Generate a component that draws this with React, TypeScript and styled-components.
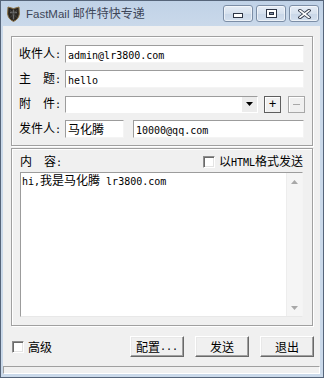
import React from 'react';
import styled, { createGlobalStyle } from 'styled-components';

const GlobalStyle = createGlobalStyle`
  html, body { margin: 0; padding: 0; background: #c6d6e8; }
  * { box-sizing: border-box; }
`;

const CJK_RE = /([\u2E80-\u9FFF\u3000-\u303F\uFF00-\uFFEF]+)/;

const Cjk = styled.span`
  font-family: "Noto Sans CJK SC", sans-serif;
  font-size: 12px;
`;

const Ascii = styled.span`
  font-family: "DejaVu Sans Mono", monospace;
  font-size: 10px;
  white-space: pre;
`;

const Mixed = ({ text }: { text: string }) => (
  <>
    {text
      .split(CJK_RE)
      .filter(Boolean)
      .map((part, i) =>
        CJK_RE.test(part) ? <Cjk key={i}>{part}</Cjk> : <Ascii key={i}>{part}</Ascii>
      )}
  </>
);

const Window = styled.div`
  width: 324px;
  height: 378px;
  border: 1px solid #56657a;
  background: linear-gradient(#c0d2e7, #cad9ea 26px, #cad9ea);
  padding: 0 3px 3px 2px;
  display: flex;
  flex-direction: column;
`;

const TitleBar = styled.div`
  height: 25px;
  flex-shrink: 0;
  display: flex;
  align-items: center;
  padding: 0 1px 0 4px;
`;

const TitleText = styled.div`
  margin-left: 6px;
  color: #3d4658;
  white-space: nowrap;
  line-height: 16px;
`;

const TitleLatin = styled.span`
  font-family: "Liberation Sans", sans-serif;
  font-size: 11.5px;
`;

const TitleCjk = styled.span`
  font-family: "Noto Sans CJK SC", sans-serif;
  font-size: 12px;
`;

const Captions = styled.div`
  margin-left: auto;
  align-self: flex-start;
  margin-top: 4px;
  display: flex;
  gap: 3px;
`;

const CaptionButton = styled.div<{ $glyph: 'min' | 'max' | 'close' }>`
  width: 30px;
  height: 17px;
  border: 1px solid #7c8ea6;
  border-radius: 3px;
  background: linear-gradient(#e6edf6, #d6e1ee 50%, #c8d6e8 51%, #d4e0ee);
  box-shadow: inset 0 0 0 1px rgba(255, 255, 255, 0.55);
  display: flex;
  justify-content: center;
  align-items: ${(p) => (p.$glyph === 'min' ? 'flex-end' : 'center')};
  padding-bottom: ${(p) => (p.$glyph === 'min' ? '3px' : '0')};
`;

const Client = styled.div`
  flex: 1;
  background: #f0f0f0;
  display: flex;
  flex-direction: column;
  padding-top: 10px;
`;

const Group = styled.div`
  margin: 0 7px 0 8px;
  border: 1px solid #a0a0a0;
  box-shadow: inset 1px 1px 0 #ffffff, 1px 1px 0 #ffffff;
`;

const HeaderGroup = styled(Group)`
  padding: 8px 8px 7px 7px;
  display: flex;
  flex-direction: column;
  gap: 7px;
`;

const BodyGroup = styled(Group)`
  margin-top: 2px;
  height: 178px;
  padding: 3px 9px 8px 8px;
  display: flex;
  flex-direction: column;
`;

const Row = styled.div`
  height: 18px;
  display: flex;
  align-items: center;
`;

const Label = styled.div`
  width: 46px;
  flex-shrink: 0;
  line-height: 18px;
  white-space: nowrap;
  color: #000;
`;

const EditBox = styled.div<{ $width?: number }>`
  height: 18px;
  ${(p) => (p.$width ? `width: ${p.$width}px; flex-shrink: 0;` : 'flex: 1;')}
  background: #fff;
  border-top: 1px solid #9c9c9c;
  border-left: 1px solid #9c9c9c;
  border-right: 1px solid #f4f4f4;
  border-bottom: 1px solid #f4f4f4;
  padding: 0 2px;
  line-height: 16px;
  white-space: nowrap;
  overflow: hidden;
  color: #000;
`;

const Combo = styled.div`
  flex: 1;
  height: 17px;
  background: #fff;
  border-top: 1px solid #9c9c9c;
  border-left: 1px solid #9c9c9c;
  border-right: 1px solid #fff;
  border-bottom: 1px solid #fff;
  display: flex;
  justify-content: flex-end;
`;

const DropButton = styled.div`
  width: 15px;
  background: #ececec;
  display: flex;
  align-items: center;
  justify-content: center;
`;

const SmallButton = styled.div<{ $disabled?: boolean }>`
  width: 17px;
  height: 17px;
  flex-shrink: 0;
  margin-left: ${(p) => (p.$disabled ? '7px' : '6px')};
  margin-right: ${(p) => (p.$disabled ? '-1px' : '0')};
  border: 1px solid ${(p) => (p.$disabled ? '#a8a8a8' : '#5e5e5e')};
  box-shadow: inset 1px 1px 0 #fff;
  background: #f0f0f0;
  color: ${(p) => (p.$disabled ? '#a8a8a8' : '#000')};
  font-family: "DejaVu Sans Mono", monospace;
  font-size: 12px;
  line-height: 14px;
  text-align: center;
`;

const NameGap = styled.div`
  width: 9px;
  flex-shrink: 0;
`;

const BodyHeader = styled.div`
  height: 20px;
  display: flex;
  align-items: center;
  justify-content: space-between;
`;

const PlainText = styled.div`
  line-height: 16px;
  white-space: nowrap;
  color: #000;
`;

const CheckLabel = styled.label`
  display: flex;
  align-items: center;
  gap: 4px;
  color: #000;
  line-height: 16px;
  white-space: nowrap;
`;

const CheckBox = styled.span`
  width: 12px;
  height: 12px;
  flex-shrink: 0;
  background: #fff;
  border-top: 1px solid #8e8e8e;
  border-left: 1px solid #8e8e8e;
  border-right: 1px solid #fff;
  border-bottom: 1px solid #fff;
  box-shadow: inset 1px 1px 0 #6a6a6a, inset -1px -1px 0 #e3e3e3;
`;

const TextArea = styled.div`
  flex: 1;
  display: flex;
  background: #fff;
  border-top: 1px solid #9c9c9c;
  border-left: 1px solid #9c9c9c;
  border-right: 1px solid #f4f4f4;
  border-bottom: 1px solid #e8e8e8;
`;

const BodyText = styled.div`
  flex: 1;
  padding: 0 0 0 1px;
  line-height: 13px;
  white-space: nowrap;
  color: #000;
`;

const ScrollBar = styled.div`
  width: 16px;
  background: #f5f5f5;
  border-left: 1px solid #ededed;
  display: flex;
  flex-direction: column;
  justify-content: space-between;
`;

const ScrollArrow = styled.div`
  height: 17px;
  display: flex;
  align-items: center;
  justify-content: center;
`;

const BottomRow = styled.div`
  margin-top: 10px;
  height: 21px;
  display: flex;
  align-items: center;
  padding: 0 6px 0 9px;
`;

const Spacer = styled.div`
  flex: 1;
`;

const PushButton = styled.div<{ $gap?: number }>`
  width: 54px;
  height: 21px;
  margin-left: ${(p) => p.$gap ?? 0}px;
  background: #f0f0f0;
  border-top: 1px solid #fff;
  border-left: 1px solid #fff;
  border-right: 1px solid #696969;
  border-bottom: 1px solid #696969;
  box-shadow: inset -1px -1px 0 #a0a0a0, inset 1px 1px 0 #e8e8e8;
  display: flex;
  align-items: center;
  justify-content: center;
  color: #000;
  line-height: 16px;
  white-space: nowrap;
`;

const StatusBar = styled.div`
  margin-top: 9px;
  height: 8px;
  border-top: 1px solid #a0a0a0;
  border-left: 1px solid #a0a0a0;
  border-right: 1px solid #fff;
  border-bottom: 1px solid #fff;
`;

const AppIcon = () => (
  <svg width="13" height="16" viewBox="0 0 13 16">
    <path d="M1 1 L6.5 2.6 L12 1 L12.4 8 Q11.5 13.5 6.5 15.4 Q1.5 13.5 0.6 8 Z" fill="#2a2622" stroke="#8c7346" strokeWidth="1" />
    <path d="M6.5 3.5 V13.5 M3 6.5 H10" stroke="#6b6b6b" strokeWidth="1.4" />
    <path d="M3.2 4.2 L9.8 11.5 M9.8 4.2 L3.2 11.5" stroke="#4a4a4a" strokeWidth="0.8" />
  </svg>
);

const GLYPH = '#2e3646';

const MinGlyph = () => (
  <svg width="10" height="5" viewBox="0 0 10 5">
    <rect x="0.5" y="0.5" width="9" height="4" fill="#fff" stroke={GLYPH} />
  </svg>
);

const MaxGlyph = () => (
  <svg width="11" height="9" viewBox="0 0 11 9">
    <rect x="0.5" y="0.5" width="10" height="8" fill="#fff" stroke={GLYPH} />
    <rect x="3.5" y="3.5" width="4" height="2" fill="#8391a6" stroke={GLYPH} />
  </svg>
);

const CloseGlyph = () => (
  <svg width="13" height="10" viewBox="0 0 13 10">
    <path d="M2 1.5 L11 8.5 M11 1.5 L2 8.5" stroke={GLYPH} strokeWidth="3.4" strokeLinecap="square" />
    <path d="M2 1.5 L11 8.5 M11 1.5 L2 8.5" stroke="#fff" strokeWidth="1.6" strokeLinecap="square" />
  </svg>
);

const MinusGlyph = ({ color }: { color: string }) => (
  <svg width="7" height="15" viewBox="0 0 7 15">
    <path d="M0 7.5 H7" stroke={color} strokeWidth="1" />
  </svg>
);

const DownTriangle = ({ color, w, h }: { color: string; w: number; h: number }) => (
  <svg width={w} height={h} viewBox={`0 0 ${w} ${h}`}>
    <path d={`M0 0 H${w} L${w / 2} ${h} Z`} fill={color} />
  </svg>
);

const UpTriangle = ({ color, w, h }: { color: string; w: number; h: number }) => (
  <svg width={w} height={h} viewBox={`0 0 ${w} ${h}`}>
    <path d={`M0 ${h} H${w} L${w / 2} 0 Z`} fill={color} />
  </svg>
);

export default function App() {
  return (
    <>
      <GlobalStyle />
      <Window>
        <TitleBar>
          <AppIcon />
          <TitleText>
            <TitleLatin>FastMail </TitleLatin>
            <TitleCjk>邮件特快专递</TitleCjk>
          </TitleText>
          <Captions>
            <CaptionButton $glyph="min">
              <MinGlyph />
            </CaptionButton>
            <CaptionButton $glyph="max">
              <MaxGlyph />
            </CaptionButton>
            <CaptionButton $glyph="close">
              <CloseGlyph />
            </CaptionButton>
          </Captions>
        </TitleBar>
        <Client>
          <HeaderGroup>
            <Row>
              <Label>
                <Mixed text="收件人:" />
              </Label>
              <EditBox>
                <Mixed text="admin@lr3800.com" />
              </EditBox>
            </Row>
            <Row>
              <Label>
                <Mixed text="主  题:" />
              </Label>
              <EditBox>
                <Mixed text="hello" />
              </EditBox>
            </Row>
            <Row>
              <Label>
                <Mixed text="附  件:" />
              </Label>
              <Combo>
                <DropButton>
                  <DownTriangle color="#000" w={7} h={4} />
                </DropButton>
              </Combo>
              <SmallButton>+</SmallButton>
              <SmallButton $disabled aria-label="-">
                <MinusGlyph color="#a8a8a8" />
              </SmallButton>
            </Row>
            <Row>
              <Label>
                <Mixed text="发件人:" />
              </Label>
              <EditBox $width={59}>
                <Mixed text="马化腾" />
              </EditBox>
              <NameGap />
              <EditBox>
                <Mixed text="10000@qq.com" />
              </EditBox>
            </Row>
          </HeaderGroup>
          <BodyGroup>
            <BodyHeader>
              <PlainText>
                <Mixed text="内  容:" />
              </PlainText>
              <CheckLabel>
                <CheckBox />
                <span>
                  <Mixed text="以HTML格式发送" />
                </span>
              </CheckLabel>
            </BodyHeader>
            <TextArea>
              <BodyText>
                <Mixed text="hi,我是马化腾 lr3800.com" />
              </BodyText>
              <ScrollBar>
                <ScrollArrow>
                  <UpTriangle color="#a8a8a8" w={7} h={4} />
                </ScrollArrow>
                <ScrollArrow>
                  <DownTriangle color="#a8a8a8" w={7} h={4} />
                </ScrollArrow>
              </ScrollBar>
            </TextArea>
          </BodyGroup>
          <BottomRow>
            <CheckLabel>
              <CheckBox />
              <span>
                <Mixed text="高级" />
              </span>
            </CheckLabel>
            <Spacer />
            <PushButton>
              <Mixed text="配置..." />
            </PushButton>
            <PushButton $gap={11}>
              <Mixed text="发送" />
            </PushButton>
            <PushButton $gap={11}>
              <Mixed text="退出" />
            </PushButton>
          </BottomRow>
          <StatusBar />
        </Client>
      </Window>
    </>
  );
}
